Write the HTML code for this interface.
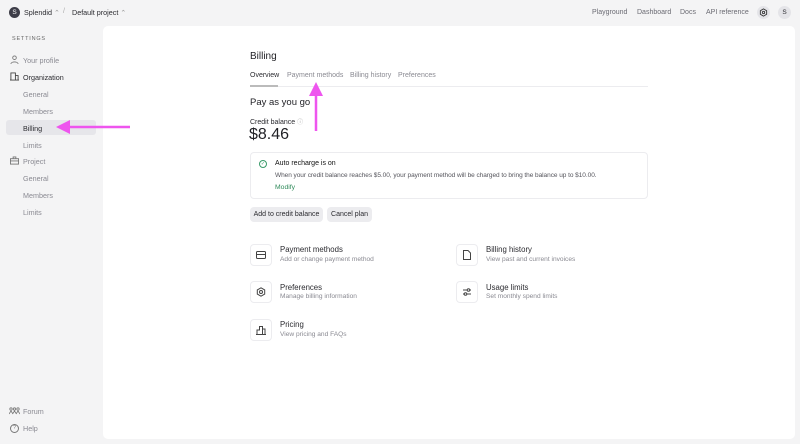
<!DOCTYPE html>
<html><head><style>
*{box-sizing:border-box;margin:0;padding:0}
body{width:800px;height:444px;background:#f4f4f5;font-family:"Liberation Sans",sans-serif;position:relative;overflow:hidden;color:#2b2b30}
.a{position:absolute;white-space:nowrap}
.nav{font-size:7px;color:#6b6b73}
.side{font-size:7.2px;color:#8a8a92}
.panel{position:absolute;left:103px;top:26px;width:692px;height:413px;background:#fff;border-radius:5px}
.btn{position:absolute;background:#ececef;border-radius:4px;font-size:7px;color:#2b2b30;height:15px;line-height:15px;text-align:center}
.ic{position:absolute;width:22px;height:22px;border:1px solid #ececef;border-radius:4px;background:#fff}
.t{font-size:7.8px;color:#2b2b30}
.s{font-size:6.6px;color:#8a8a92}
</style></head><body>
<div class="a" style="left:9px;top:7px;width:11px;height:11px;border-radius:50%;background:#3d3d48;color:#fff;font-size:6.5px;text-align:center;line-height:11px">S</div>
<div class="a" style="left:24px;top:8px;font-size:7.2px;color:#2b2b30">Splendid <span style="color:#999">⌃</span></div>
<div class="a" style="left:63px;top:8px;font-size:7px;color:#aaa">/</div>
<div class="a" style="left:72px;top:8px;font-size:7.2px;color:#2b2b30">Default project <span style="color:#999">⌃</span></div>
<div class="a nav" style="left:592px;top:9px">Playground</div>
<div class="a nav" style="left:637px;top:9px">Dashboard</div>
<div class="a nav" style="left:680px;top:9px">Docs</div>
<div class="a nav" style="left:706px;top:9px">API reference</div>
<div class="a" style="left:757px;top:6px;width:13px;height:13px;border-radius:50%;background:#e4e4e8"></div>
<svg class="a" style="left:759px;top:8px" width="9" height="9" viewBox="0 0 10 10"><path d="M5 1l3.5 2v4L5 9 1.5 7V3z" fill="none" stroke="#333" stroke-width="1"/><circle cx="5" cy="5" r="1.3" fill="none" stroke="#333" stroke-width="1"/></svg>
<div class="a" style="left:778px;top:6px;width:13px;height:13px;border-radius:50%;background:#e4e4e8;font-size:6.5px;text-align:center;line-height:13px">S</div>

<div class="a" style="left:12px;top:36px;font-size:5.5px;letter-spacing:.8px;color:#666">SETTINGS</div>
<svg class="a" style="left:10px;top:55px" width="9" height="9" viewBox="0 0 10 10"><circle cx="5" cy="3" r="2" fill="none" stroke="#777"/><path d="M1 10c0-3 8-3 8 0" fill="none" stroke="#777"/></svg>
<div class="a side" style="left:23px;top:56px">Your profile</div>
<svg class="a" style="left:10px;top:72px" width="9" height="9" viewBox="0 0 10 10"><path d="M1 9V1h5v8M6 4h3v5M0 9h10" fill="none" stroke="#444"/></svg>
<div class="a side" style="left:23px;top:73px;color:#2b2b30">Organization</div>
<div class="a side" style="left:23px;top:90px">General</div>
<div class="a side" style="left:23px;top:107px">Members</div>
<div class="a" style="left:6px;top:120px;width:90px;height:15px;background:#e6e6ea;border-radius:3px"></div>
<div class="a side" style="left:23px;top:124px;color:#2b2b30">Billing</div>
<div class="a side" style="left:23px;top:141px">Limits</div>
<svg class="a" style="left:10px;top:156px" width="9" height="9" viewBox="0 0 10 10"><rect x=".5" y="3" width="9" height="6" fill="none" stroke="#777"/><path d="M3.5 3V1h3v2M.5 5.5h9" fill="none" stroke="#777"/></svg>
<div class="a side" style="left:23px;top:157px">Project</div>
<div class="a side" style="left:23px;top:174px">General</div>
<div class="a side" style="left:23px;top:191px">Members</div>
<div class="a side" style="left:23px;top:208px">Limits</div>
<svg class="a" style="left:9px;top:407px" width="11" height="8" viewBox="0 0 11 8"><circle cx="2" cy="2" r="1.2" fill="none" stroke="#777" stroke-width=".8"/><circle cx="5.5" cy="2" r="1.2" fill="none" stroke="#777" stroke-width=".8"/><circle cx="9" cy="2" r="1.2" fill="none" stroke="#777" stroke-width=".8"/><path d="M0 7l2-3 2 3M3.5 7l2-3 2 3M7 7l2-3 2 3" fill="none" stroke="#777" stroke-width=".8"/></svg>
<div class="a side" style="left:23px;top:407px">Forum</div>
<div class="a" style="left:10px;top:424px;width:9px;height:9px;border:1px solid #777;border-radius:50%;font-size:5.5px;text-align:center;line-height:7px;color:#777">?</div>
<div class="a side" style="left:23px;top:424px">Help</div>

<div class="panel"></div>
<div class="a" style="left:250px;top:51px;font-size:10px;color:#1f1f24">Billing</div>
<div class="a" style="left:250px;top:72px;font-size:7px;color:#2b2b30">Overview</div>
<div class="a" style="left:287px;top:72px;font-size:7px;color:#8a8a92">Payment methods</div>
<div class="a" style="left:350px;top:72px;font-size:7px;color:#8a8a92">Billing history</div>
<div class="a" style="left:398px;top:72px;font-size:7px;color:#8a8a92">Preferences</div>
<div class="a" style="left:250px;top:86px;width:398px;height:1px;background:#ececef"></div>
<div class="a" style="left:250px;top:85px;width:28px;height:2px;background:#bbb"></div>
<div class="a" style="left:250px;top:97px;font-size:9.5px;color:#1f1f24">Pay as you go</div>
<div class="a" style="left:250px;top:117px;font-size:7px">Credit balance <span style="color:#aaa;font-size:6px">ⓘ</span></div>
<div class="a" style="left:249px;top:126px;font-size:16px;color:#1f1f24">$8.46</div>
<div class="a" style="left:250px;top:152px;width:398px;height:47px;border:1px solid #ececef;border-radius:4px"></div>
<div class="a" style="left:259px;top:160px;width:8px;height:8px;border:1px solid #3a9a6a;border-radius:50%;font-size:5px;color:#3a9a6a;text-align:center;line-height:6px">✓</div>
<div class="a" style="left:275px;top:160px;font-size:7px;color:#111">Auto recharge is on</div>
<div class="a" style="left:275px;top:172px;font-size:6.5px;color:#55555c;letter-spacing:-0.05px">When your credit balance reaches $5.00, your payment method will be charged to bring the balance up to $10.00.</div>
<div class="a" style="left:275px;top:184px;font-size:6.8px;color:#2f8a5a">Modify</div>
<div class="btn" style="left:250px;top:207px;width:73px">Add to credit balance</div>
<div class="btn" style="left:327px;top:207px;width:45px">Cancel plan</div>

<div class="ic" style="left:250px;top:244px"></div><svg class="a" style="left:256px;top:251px" width="10" height="8" viewBox="0 0 10 8"><rect x=".5" y=".5" width="9" height="7" rx="1" fill="none" stroke="#444"/><path d="M.5 3.5h9" stroke="#444"/></svg>
<div class="a t" style="left:280px;top:245px">Payment methods</div><div class="a s" style="left:280px;top:256px">Add or change payment method</div>
<div class="ic" style="left:456px;top:244px"></div><svg class="a" style="left:463px;top:250px" width="8" height="10" viewBox="0 0 8 10"><path d="M.5.5h4.5l2.5 2.5v6.5h-7z" fill="none" stroke="#444"/></svg>
<div class="a t" style="left:486px;top:245px">Billing history</div><div class="a s" style="left:486px;top:256px">View past and current invoices</div>
<div class="ic" style="left:250px;top:281px"></div><svg class="a" style="left:256px;top:287px" width="10" height="10" viewBox="0 0 10 10"><path d="M5 .8l3.7 2.1v4.2L5 9.2 1.3 7.1V2.9z" fill="none" stroke="#444"/><circle cx="5" cy="5" r="1.5" fill="none" stroke="#444"/></svg>
<div class="a t" style="left:280px;top:283px">Preferences</div><div class="a s" style="left:280px;top:293px">Manage billing information</div>
<div class="ic" style="left:456px;top:281px"></div><svg class="a" style="left:462px;top:287px" width="10" height="10" viewBox="0 0 10 10"><path d="M1 3h8M1 7h8" stroke="#444"/><circle cx="6.5" cy="3" r="1.3" fill="#fff" stroke="#444"/><circle cx="3.5" cy="7" r="1.3" fill="#fff" stroke="#444"/></svg>
<div class="a t" style="left:486px;top:283px">Usage limits</div><div class="a s" style="left:486px;top:293px">Set monthly spend limits</div>
<div class="ic" style="left:250px;top:319px"></div><svg class="a" style="left:256px;top:325px" width="10" height="10" viewBox="0 0 10 10"><path d="M1 9.5V5h2.5V1.5h3V9.5M6.5 4H9v5.5M0 9.5h10" fill="none" stroke="#444"/></svg>
<div class="a t" style="left:280px;top:320px">Pricing</div><div class="a s" style="left:280px;top:331px">View pricing and FAQs</div>

<svg class="a" style="left:0;top:0" width="800" height="444"><g fill="#ee55ee" stroke="#ee55ee"><path d="M130 127H68" stroke-width="2.5"/><path d="M56 127l14-7v14z" stroke="none"/><path d="M316 131V95" stroke-width="2.5"/><path d="M316 82l-7 14h14z" stroke="none"/></g></svg>
</body></html>
